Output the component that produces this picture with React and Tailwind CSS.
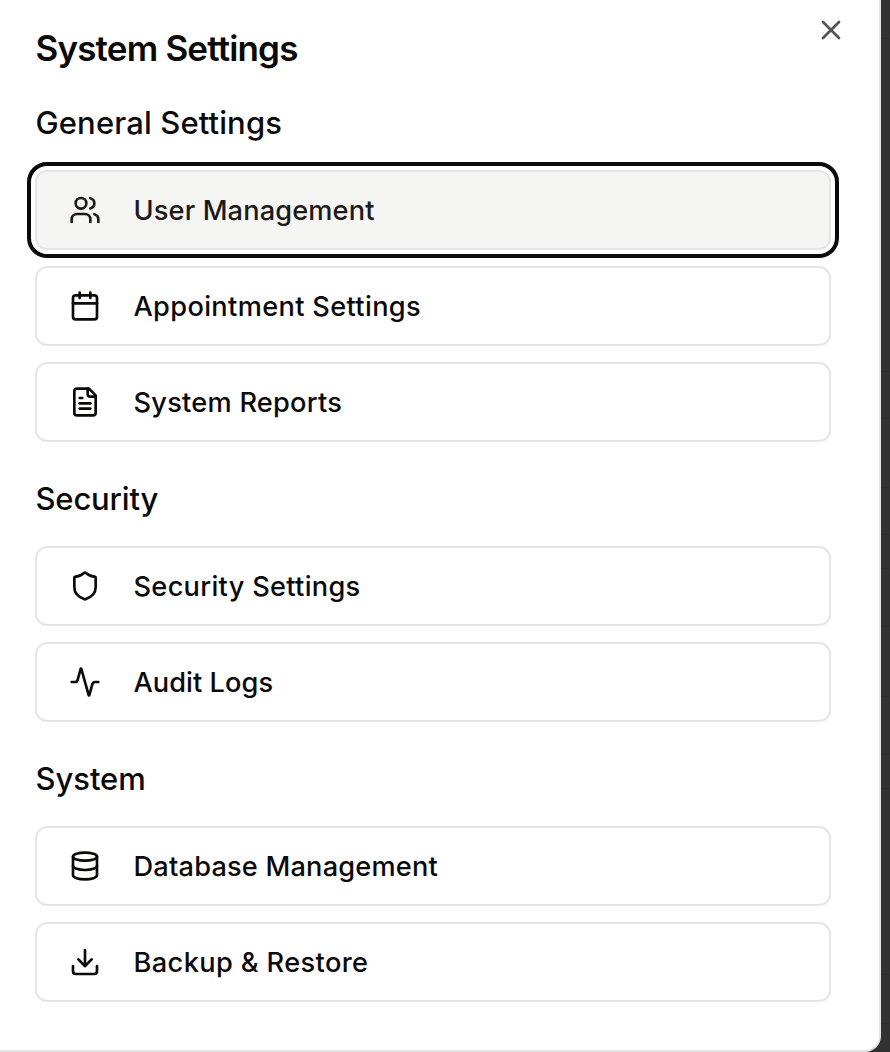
import { Users, Calendar, Shield, Activity, Database, Download, X } from "lucide-react";

function FileText({ className }) {
  return (
    <svg className={className} viewBox="0 0 24 24" fill="none" stroke="currentColor" strokeWidth="2" strokeLinecap="round" strokeLinejoin="round">
      <path d="M15 2H6a2 2 0 0 0-2 2v16a2 2 0 0 0 2 2h12a2 2 0 0 0 2-2V7Z" />
      <path d="M14 2v4a2 2 0 0 0 2 2h4" />
      <path d="M10 9H8" />
      <path d="M16 13H8" />
      <path d="M16 17H8" />
    </svg>
  );
}

const sections = [
  {
    title: "General Settings",
    tracking: "tracking-[0.12px]",
    items: [
      { label: "User Management", icon: Users, tracking: "tracking-[0.13px]", active: true },
      { label: "Appointment Settings", icon: Calendar, tracking: "tracking-[0.34px]" },
      { label: "System Reports", icon: FileText, tracking: "tracking-[0.24px]" },
    ],
  },
  {
    title: "Security",
    tracking: "tracking-[-0.18px]",
    items: [
      { label: "Security Settings", icon: Shield, tracking: "tracking-[0.3px]" },
      { label: "Audit Logs", icon: Activity, tracking: "tracking-[0.05px]" },
    ],
  },
  {
    title: "System",
    tracking: "tracking-[-0.05px]",
    items: [
      { label: "Database Management", icon: Database, tracking: "tracking-[0.19px]" },
      { label: "Backup & Restore", icon: Download, tracking: "tracking-[0.38px]" },
    ],
  },
];

// Row heights of the dimmed page behind the sheet.
const backdropRows = [39, 333, 47, 69, 47, 34, 58, 70, 58, 34, 186, 49];

function SettingButton({ label, icon: Icon, tracking, active }) {
  const state = active
    ? "bg-[#f5f5f4] text-[#1c1917] outline-4 outline-offset-4 outline-[#0a0a0a]"
    : "bg-white text-[#0c0a09]";
  return (
    <button className={`flex h-20 w-full items-center rounded-xl border-2 border-[#e5e5e5] pl-8 text-left text-[27.2px] leading-10 font-medium ${state}`}>
      <Icon className="mr-8 size-8 shrink-0" />
      <span className={`pt-px pl-[0.5px] ${tracking}`}>{label}</span>
    </button>
  );
}

export default function App() {
  return (
    <div className="grid h-[1052px] w-[890px] grid-cols-1 grid-rows-1 overflow-hidden bg-[#323232] font-['Inter',sans-serif] text-[#0c0a09]">
      <div aria-hidden="true" className="col-start-1 row-start-1 flex flex-col">
        {backdropRows.map((h, n) => (
          <div key={n} className="shrink-0 border-b border-[#2e2e2e]" style={{ height: h }} />
        ))}
      </div>
      <main className="relative col-start-1 row-start-1 h-[1052px] w-[881px] rounded-br-[16px] border-r-2 border-b-2 border-[#e5e5e5] bg-white pt-[30px] pr-12 pl-[35px]">
        <button aria-label="Close" className="absolute top-[14px] right-8 text-[#555453]">
          <X className="size-8" />
        </button>
        <h1 className="pl-[0.5px] text-[35px] leading-[37px] font-semibold tracking-[-0.82px]">System Settings</h1>
        <div className="mt-7 flex flex-col gap-[29px]">
          {sections.map((s) => (
            <section key={s.title}>
              <h2 className={`mb-[19px] pl-[0.5px] text-[31px] leading-[56px] font-medium ${s.tracking}`}>{s.title}</h2>
              <div className="flex flex-col gap-4">
                {s.items.map((i) => (
                  <SettingButton key={i.label} {...i} />
                ))}
              </div>
            </section>
          ))}
        </div>
      </main>
    </div>
  );
}
